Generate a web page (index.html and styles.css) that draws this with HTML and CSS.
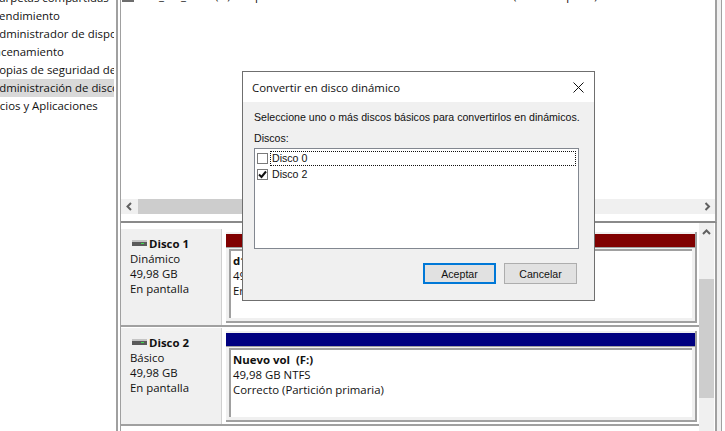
FILE: index.html
```html
<!DOCTYPE html>
<html lang="es">
<head>
    <meta charset="UTF-8">
    <title>Administración de discos</title>
    <link rel="stylesheet" href="styles.css">
</head>
<body>
    <div class="window">
        <div class="tree">
            <div class="tree-row tree-first">Carpetas compartidas</div>
            <div class="tree-row">Rendimiento</div>
            <div class="tree-row">Administrador de dispositivos</div>
            <div class="tree-row tree-top">Almacenamiento</div>
            <div class="tree-row">Copias de seguridad de Windows</div>
            <div class="tree-row selected">Administración de discos</div>
            <div class="tree-row tree-top">Servicios y Aplicaciones</div>
        </div>
        <div class="splitter"></div>
        <div class="content">
            <div class="upper">
                <div class="upper-list">
                    <div class="cut-row">
                        <svg class="cut-icon" width="12" height="2"><rect width="12" height="2" fill="#6d6d6d"/></svg>
                        <span class="cut-a">_</span><span class="cut-b">_</span><span class="cut-c">(F:)</span><span class="cut-d">p</span><span class="cut-e">(Partición prim.)</span>
                    </div>
                </div>
                <div class="hscroll">
                    <svg class="arrow" width="17" height="15" viewBox="0 0 17 15"><path d="M10 4 L6.5 7.5 L10 11" fill="none" stroke="#606060" stroke-width="2"/></svg>
                    <div class="hthumb"></div>
                    <svg class="arrow" width="16" height="15" viewBox="0 0 16 15"><path d="M6.5 4 L10 7.5 L6.5 11" fill="none" stroke="#606060" stroke-width="2"/></svg>
                </div>
            </div>
            <div class="lower">
                <div class="disks">
                    <div class="disk">
                        <div class="disk-info">
                            <div class="disk-name">
                                <svg width="15" height="7" viewBox="0 0 15 7"><rect y="0" width="15" height="2" fill="#c4c4c4"/><rect y="2" width="15" height="4" fill="#5a5a5a"/><rect x="9" y="3" width="3" height="1" fill="#3fdc4e"/></svg>
                                Disco 1
                            </div>
                            <div>Dinámico</div>
                            <div>49,98 GB</div>
                            <div>En pantalla</div>
                        </div>
                        <div class="volume">
                            <div class="vol-bar bar-red"></div>
                            <div class="vol-box">
                                <div class="vol-name">d1</div>
                                <div>49,98 GB NTFS</div>
                                <div>Error</div>
                            </div>
                        </div>
                    </div>
                    <div class="disk">
                        <div class="disk-info">
                            <div class="disk-name">
                                <svg width="15" height="7" viewBox="0 0 15 7"><rect y="0" width="15" height="2" fill="#c4c4c4"/><rect y="2" width="15" height="4" fill="#5a5a5a"/><rect x="9" y="3" width="3" height="1" fill="#3fdc4e"/></svg>
                                Disco 2
                            </div>
                            <div>Básico</div>
                            <div>49,98 GB</div>
                            <div>En pantalla</div>
                        </div>
                        <div class="volume">
                            <div class="vol-bar bar-blue"></div>
                            <div class="vol-box">
                                <div class="vol-name">Nuevo vol&nbsp; (F:)</div>
                                <div>49,98 GB NTFS</div>
                                <div>Correcto (Partición primaria)</div>
                            </div>
                        </div>
                    </div>
                </div>
                <div class="vscroll">
                    <svg class="arrow" width="15" height="17" viewBox="0 0 15 17"><path d="M4 11 L7.5 7.5 L11 11" fill="none" stroke="#606060" stroke-width="2"/></svg>
                    <div class="vthumb"></div>
                </div>
            </div>
        </div>
    </div>

    <div class="dialog">
        <div class="dialog-title">
            <span>Convertir en disco dinámico</span>
            <svg width="11" height="11" viewBox="0 0 11 11"><path d="M0.5 0.5 L10.5 10.5 M10.5 0.5 L0.5 10.5" stroke="#111" stroke-width="1"/></svg>
        </div>
        <div class="dialog-body">
            <p class="intro">Seleccione uno o más discos básicos para convertirlos en dinámicos.</p>
            <p class="list-label">Discos:</p>
            <div class="list">
                <div class="list-row">
                    <span class="check"></span>
                    <span class="row-text focused">Disco 0</span>
                </div>
                <div class="list-row">
                    <span class="check checked">
                        <svg width="9" height="9" viewBox="0 0 9 9"><path d="M1 4.5 L3.5 7 L8 1.5" fill="none" stroke="#111" stroke-width="2"/></svg>
                    </span>
                    <span class="row-text">Disco 2</span>
                </div>
            </div>
            <div class="buttons">
                <button class="btn btn-default">Aceptar</button>
                <button class="btn">Cancelar</button>
            </div>
        </div>
    </div>
</body>
</html>
```

FILE: styles.css
```css
html, body {
    margin: 0;
    padding: 0;
    height: 431px;
    overflow: hidden;
    background-color: #fff;
}

body {
    font-family: "Open Sans", sans-serif;
    font-size: 11.4px;
    color: #111;
}

.window {
    display: flex;
    width: 721px;
    height: 431px;
    border-right: 1px solid #a0a0a0;
}

.tree {
    width: 116px;
    flex-shrink: 0;
    overflow: hidden;
}

.tree-row {
    height: 18px;
    line-height: 18px;
    white-space: nowrap;
    overflow: hidden;
    margin-right: 2px;
    margin-left: 0;
    text-indent: -8px;
}

.tree-first {
    margin-top: -11px;
}

.tree-top {
    text-indent: -26px;
}

.selected {
    background-color: #d9d9d9;
}

.splitter {
    width: 5px;
    flex-shrink: 0;
    box-sizing: border-box;
    border-left: 2px solid #a0a0a0;
    border-right: 1px solid #a0a0a0;
}

.content {
    flex: 1;
    min-width: 0;
    display: flex;
    flex-direction: column;
    border-right: 4px solid #f0f0f0;
}

.upper {
    height: 223px;
    flex-shrink: 0;
    box-sizing: border-box;
    border-bottom: 2px solid #8a8a8a;
    border-right: 2px solid #a0a0a0;
    display: flex;
    flex-direction: column;
}

.upper-list {
    height: 199px;
    overflow: hidden;
}

.cut-row {
    position: relative;
    height: 12px;
}

.cut-icon {
    position: absolute;
    left: 1px;
    top: 0;
}

.cut-row span {
    position: absolute;
    top: -13px;
    line-height: 18px;
    white-space: nowrap;
}

.cut-a { left: 38px; }
.cut-b { left: 60px; }
.cut-c { left: 94px; }
.cut-d { left: 134px; }
.cut-e { left: 392px; }

.hscroll {
    height: 15px;
    display: flex;
    background-color: #f0f0f0;
}

.hthumb {
    flex: 1;
    margin-right: 200px;
    background-color: #cdcdcd;
}

.arrow {
    flex-shrink: 0;
    display: block;
}

.lower {
    flex: 1;
    display: flex;
    min-height: 0;
    border-right: 2px solid #a0a0a0;
}

.disks {
    flex: 1;
    min-width: 0;
    padding-top: 6px;
}

.disk {
    display: flex;
    height: 98px;
    box-sizing: border-box;
    border-bottom: 2px solid #a0a0a0;
    margin-bottom: 1px;
}

.disk-info {
    width: 101px;
    flex-shrink: 0;
    box-sizing: border-box;
    background-color: #f0f0f0;
    padding: 7px 0 0 9px;
    line-height: 15px;
    border-right: 1px solid #d0d0d0;
}

.disk-name {
    font-weight: 700;
    display: flex;
    align-items: center;
    gap: 2px;
    margin-left: 2px;
}

.volume {
    flex: 1;
    min-width: 0;
    box-sizing: border-box;
    margin: 3px 2px 2px 4px;
    padding-top: 2px;
    border-right: 2px solid #a0a0a0;
    border-bottom: 2px solid #a0a0a0;
    background-color: #f0f0f0;
    display: flex;
    flex-direction: column;
}

.vol-bar {
    height: 13px;
    flex-shrink: 0;
    margin-bottom: 1px;
    border-bottom: 1px solid #a0a0a0;
}

.bar-red { background-color: #800000; }
.bar-blue { background-color: #000080; }

.vol-box {
    flex: 1;
    margin: 0 3px 3px 3px;
    padding: 2px 0 0 2px;
    background-color: #fff;
    border-top: 2px solid #a0a0a0;
    border-left: 2px solid #a0a0a0;
    line-height: 15px;
}

.vol-name {
    font-weight: 700;
}

.vscroll {
    width: 15px;
    flex-shrink: 0;
    background-color: #f0f0f0;
    margin-right: 1px;
}

.vthumb {
    height: 119px;
    margin-top: 39px;
    background-color: #cdcdcd;
}

/* modal on top of the console */
.dialog {
    position: absolute;
    left: 242px;
    top: 71px;
    width: 353px;
    height: 230px;
    box-sizing: border-box;
    border: 1px solid #6f6f6f;
    background-color: #f0f0f0;
    display: flex;
    flex-direction: column;
}

.dialog-title {
    height: 30px;
    flex-shrink: 0;
    background-color: #fff;
    display: flex;
    align-items: center;
    justify-content: space-between;
    padding: 0 10px 0 9px;
}

.dialog-body {
    flex: 1;
    padding: 0 15px 0 11px;
    font-family: "Liberation Sans", sans-serif;
    font-size: 10.6px;
}

.intro {
    margin: 8px 0 0 0;
    line-height: 15px;
    white-space: nowrap;
}

.list-label {
    margin: 6px 0 3px 0;
    line-height: 14px;
}

.list {
    height: 101px;
    box-sizing: border-box;
    border: 1px solid #828790;
    background-color: #fff;
    padding: 1px 2px 0 2px;
}

.list-row {
    height: 16px;
    display: flex;
    align-items: center;
    gap: 2px;
}

.check {
    width: 11px;
    height: 11px;
    box-sizing: border-box;
    border: 1px solid #7a7a7a;
    background-color: #fff;
    flex-shrink: 0;
    display: flex;
    align-items: center;
    justify-content: center;
}

.row-text {
    flex: 1;
    height: 15px;
    line-height: 15px;
    padding-left: 2px;
    box-sizing: border-box;
}

.focused {
    outline: 1px dotted #111;
    outline-offset: -1px;
}

.buttons {
    display: flex;
    justify-content: flex-end;
    gap: 8px;
    margin-top: 14px;
    margin-right: 2px;
}

.btn {
    width: 73px;
    height: 21px;
    padding: 0;
    box-sizing: border-box;
    background-color: #e1e1e1;
    border: 1px solid #adadad;
    font-family: "Liberation Sans", sans-serif;
    font-size: 10.6px;
    color: #111;
}

.btn-default {
    border: 2px solid #0078d7;
}
```
